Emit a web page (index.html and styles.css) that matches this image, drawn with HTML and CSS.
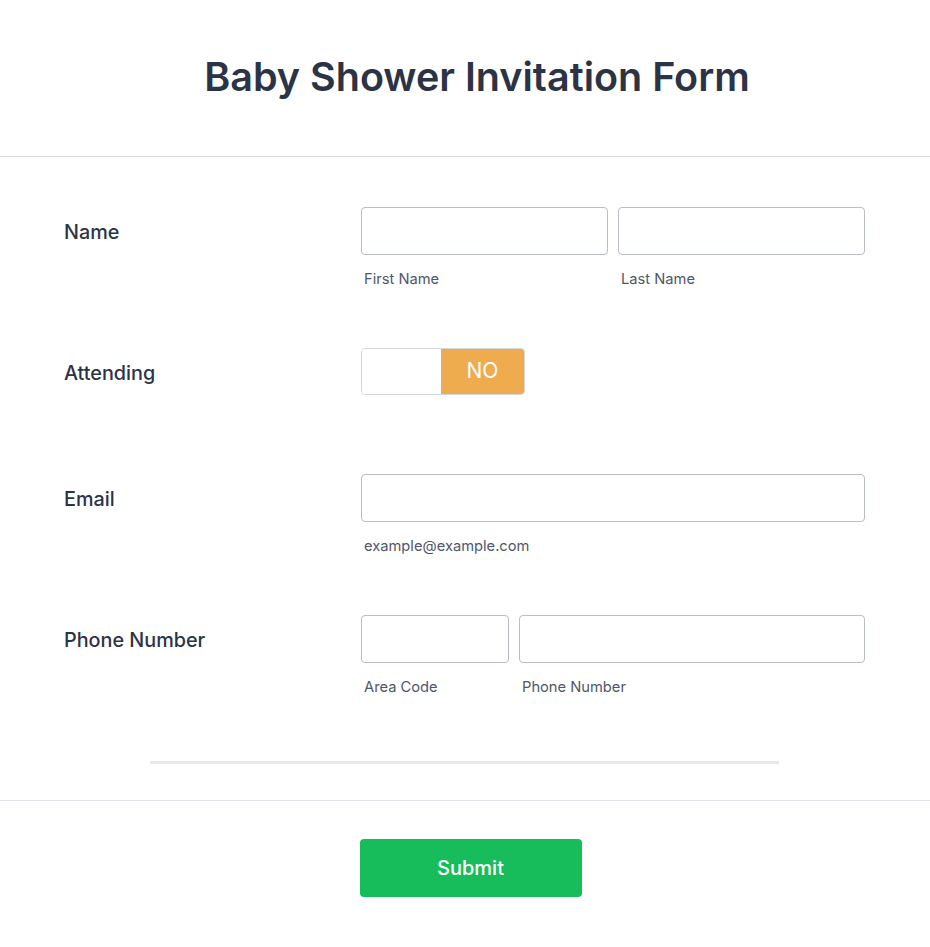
FILE: index.html
```html
<!DOCTYPE html>
<html lang="en">

<head>
    <meta charset="UTF-8">
    <meta name="viewport" content="width=device-width, initial-scale=1.0">
    <title>Baby Shower Invitation Form</title>
    <link rel="stylesheet" href="styles.css">
</head>

<body>
    <form class="form" onsubmit="event.preventDefault()">
        <header class="form-header">
            <h1>Baby Shower Invitation Form</h1>
        </header>

        <section class="form-body">
            <div class="field">
                <label class="field-label">Name</label>
                <div class="field-inputs">
                    <div class="sub">
                        <input class="input" type="text">
                        <span class="sublabel">First Name</span>
                    </div>
                    <div class="sub">
                        <input class="input" type="text">
                        <span class="sublabel">Last Name</span>
                    </div>
                </div>
            </div>

            <div class="field field-toggle">
                <label class="field-label">Attending</label>
                <div class="field-inputs">
                    <div class="toggle">
                        <span class="toggle-off"></span>
                        <span class="toggle-on">NO</span>
                    </div>
                </div>
            </div>

            <div class="field">
                <label class="field-label">Email</label>
                <div class="field-inputs">
                    <div class="sub">
                        <input class="input" type="email">
                        <span class="sublabel">example@example.com</span>
                    </div>
                </div>
            </div>

            <div class="field">
                <label class="field-label">Phone Number</label>
                <div class="field-inputs">
                    <div class="sub sub-area">
                        <input class="input" type="text">
                        <span class="sublabel">Area Code</span>
                    </div>
                    <div class="sub">
                        <input class="input" type="text">
                        <span class="sublabel">Phone Number</span>
                    </div>
                </div>
            </div>

            <hr class="divider">
        </section>

        <footer class="form-footer">
            <button class="submit" type="submit">Submit</button>
        </footer>
    </form>
</body>

</html>
```

FILE: styles.css
```css
body {
    margin: 0;
    padding: 0;
    background: #fff;
    font-family: Inter, "Noto Sans", sans-serif;
    color: #2c3345;
}

h1 {
    margin: 0;
}

.form-header {
    height: 157px;
    box-sizing: border-box;
    padding: 55px 0 0 24px;
    border-bottom: 1px solid #d8dae8;
    text-align: center;
}

.form-header h1 {
    font-size: 39.5px;
    line-height: 44px;
    font-weight: 600;
    color: #2c3345;
}

.form-body {
    padding: 50px 65px 0 64px;
}

.field {
    display: flex;
    align-items: flex-start;
    margin-bottom: 60px;
}

.field-toggle {
    margin-bottom: 76px;
}

.field-label {
    width: 297px;
    flex-shrink: 0;
    font-size: 19.8px;
    font-weight: 500;
    line-height: 50px;
    color: #2c3345;
}

.field-inputs {
    flex: 1;
    display: flex;
    gap: 10px;
}

.sub {
    flex: 1;
    min-width: 0;
    display: flex;
    flex-direction: column;
}

.sub-area {
    flex: 0 0 148px;
}

.input {
    width: 100%;
    height: 48px;
    box-sizing: border-box;
    border: 1px solid #b8bdc9;
    border-radius: 4px;
    padding: 0 12px;
    font: inherit;
    background: #fff;
}

.sublabel {
    margin-top: 15px;
    padding-left: 3px;
    font-size: 14.7px;
    line-height: 18px;
    color: #505669;
}

.toggle {
    display: flex;
    width: 164px;
    height: 47px;
    box-sizing: border-box;
    border: 1px solid #d3d6de;
    border-radius: 4px;
    overflow: hidden;
}

.toggle-off {
    width: 79px;
    background: #fff;
}

.toggle-on {
    flex: 1;
    display: flex;
    align-items: center;
    justify-content: center;
    padding-bottom: 3px;
    background: #efac4e;
    color: #fff;
    font-size: 21px;
}

.divider {
    width: 629px;
    height: 3px;
    margin: 65px auto 36px;
    border: 0;
    background: #e8e8ec;
}

.form-footer {
    border-top: 1px solid #e3e1f0;
    padding: 38px 0 50px 11px;
    display: flex;
    justify-content: center;
}

.submit {
    width: 222px;
    height: 58px;
    border: 0;
    border-radius: 4px;
    background: #18bd5b;
    color: #fff;
    font-family: Inter, "Noto Sans", sans-serif;
    font-size: 20px;
    font-weight: 500;
}
```
